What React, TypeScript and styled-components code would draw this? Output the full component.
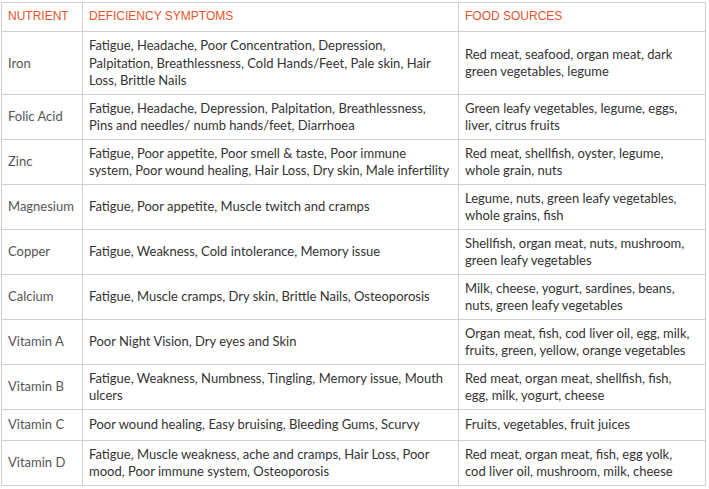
import React from "react";
import styled, { createGlobalStyle } from "styled-components";

const Global = createGlobalStyle`
  html, body { margin: 0; padding: 0; background: #ffffff; }
`;

const Wrap = styled.div`
  padding: 2px 0 0 1px;
`;

const Table = styled.table`
  border-collapse: collapse;
  table-layout: fixed;
  width: 704px;
  font-family: Lato, "Liberation Sans", sans-serif;
  font-size: 13px;
  line-height: 17.5px;
  color: #333333;
`;

const HeadCell = styled.th`
  border: 1px solid #cfcfcf;
  padding: 5px 6px 5px 6px;
  text-align: left;
  font-family: "Liberation Sans", Arial, sans-serif;
  font-weight: normal;
  font-size: 12px;
  color: #e8532b;
  height: 18px;
`;

const Row = styled.tr<{ $h?: number }>`
  height: ${(p) => (p.$h ? `${p.$h}px` : "auto")};
`;

const Cell = styled.td<{ $muted?: boolean }>`
  border: 1px solid #cfcfcf;
  padding: 5px 6px 4px 6px;
  vertical-align: middle;
  overflow: hidden;
  color: ${(p) => (p.$muted ? "#555555" : "#333333")};
`;

const Line = styled.span`
  display: block;
  white-space: nowrap;
`;

type Item = { n: string; s: string[]; f: string[]; h?: number };

const data: Item[] = [
  {
    n: "Iron",
    s: [
      "Fatigue, Headache, Poor Concentration, Depression,",
      "Palpitation, Breathlessness, Cold Hands/Feet, Pale skin, Hair",
      "Loss, Brittle Nails",
    ],
    f: ["Red meat, seafood, organ meat, dark", "green vegetables, legume"],
  },
  {
    n: "Folic Acid",
    s: [
      "Fatigue, Headache, Depression, Palpitation, Breathlessness,",
      "Pins and needles/ numb hands/feet, Diarrhoea",
    ],
    f: ["Green leafy vegetables, legume, eggs,", "liver, citrus fruits"],
  },
  {
    n: "Zinc",
    s: [
      "Fatigue, Poor appetite, Poor smell & taste, Poor immune",
      "system, Poor wound healing, Hair Loss, Dry skin, Male infertility",
    ],
    f: ["Red meat, shellfish, oyster, legume,", "whole grain, nuts"],
  },
  {
    n: "Magnesium",
    s: ["Fatigue, Poor appetite, Muscle twitch and cramps"],
    f: ["Legume, nuts, green leafy vegetables,", "whole grains, fish"],
  },
  {
    n: "Copper",
    s: ["Fatigue, Weakness, Cold intolerance, Memory issue"],
    f: ["Shellfish, organ meat, nuts, mushroom,", "green leafy vegetables"],
  },
  {
    n: "Calcium",
    s: ["Fatigue, Muscle cramps, Dry skin, Brittle Nails, Osteoporosis"],
    f: ["Milk, cheese, yogurt, sardines, beans,", "nuts, green leafy vegetables"],
  },
  {
    n: "Vitamin A",
    s: ["Poor Night Vision, Dry eyes and Skin"],
    f: ["Organ meat, fish, cod liver oil, egg, milk,", "fruits, green, yellow, orange vegetables"],
  },
  {
    n: "Vitamin B",
    s: ["Fatigue, Weakness, Numbness, Tingling, Memory issue, Mouth", "ulcers"],
    f: ["Red meat, organ meat, shellfish, fish,", "egg, milk, yogurt, cheese"],
  },
  {
    n: "Vitamin C",
    s: ["Poor wound healing, Easy bruising, Bleeding Gums, Scurvy"],
    f: ["Fruits, vegetables, fruit juices"],
    h: 31,
  },
  {
    n: "Vitamin D",
    s: [
      "Fatigue, Muscle weakness, ache and cramps, Hair Loss, Poor",
      "mood, Poor immune system, Osteoporosis",
    ],
    f: ["Red meat, organ meat, fish, egg yolk,", "cod liver oil, mushroom, milk, cheese"],
  },
];

export default function App() {
  return (
    <>
      <Global />
      <Wrap>
        <Table>
          <colgroup>
            <col style={{ width: 81 }} />
            <col style={{ width: 376 }} />
            <col style={{ width: 247 }} />
          </colgroup>
          <thead>
            <tr>
              <HeadCell>NUTRIENT</HeadCell>
              <HeadCell>DEFICIENCY SYMPTOMS</HeadCell>
              <HeadCell>FOOD SOURCES</HeadCell>
            </tr>
          </thead>
          <tbody>
            {data.map((d) => (
              <Row key={d.n} $h={d.h}>
                <Cell $muted>{d.n}</Cell>
                <Cell>
                  {d.s.map((l) => (
                    <Line key={l}>{l}</Line>
                  ))}
                </Cell>
                <Cell>
                  {d.f.map((l) => (
                    <Line key={l}>{l}</Line>
                  ))}
                </Cell>
              </Row>
            ))}
          </tbody>
        </Table>
      </Wrap>
    </>
  );
}
